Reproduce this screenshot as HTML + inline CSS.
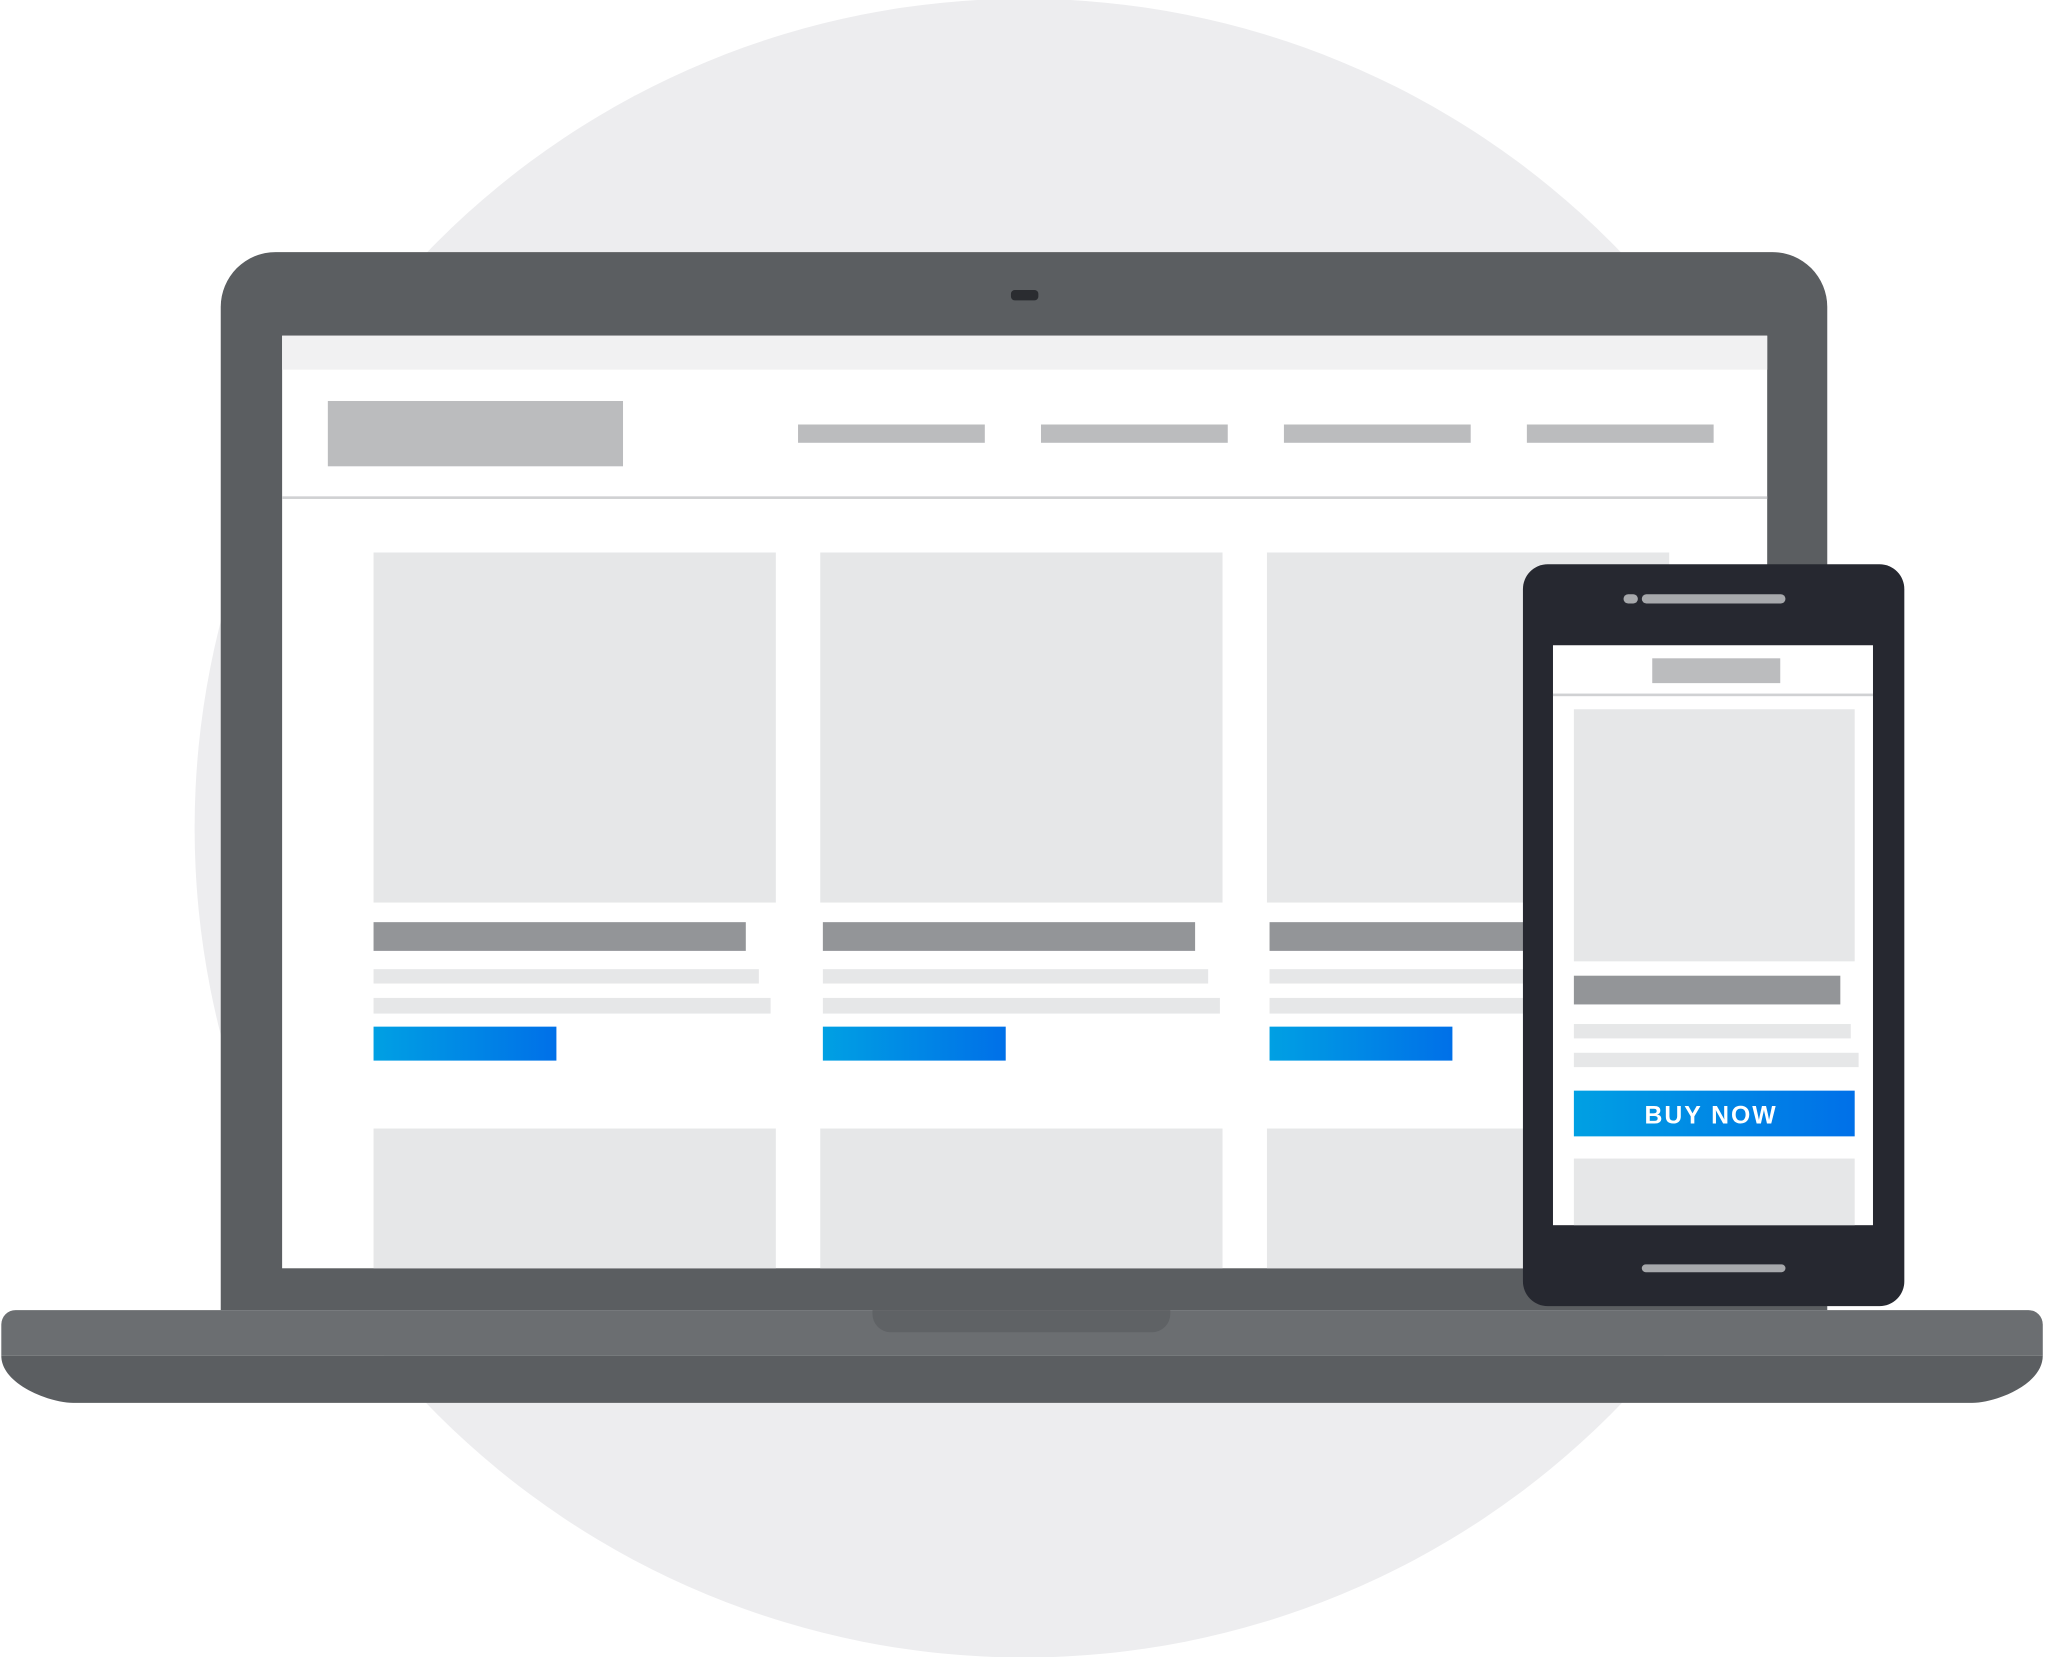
<!DOCTYPE html>
<html><head><meta charset="utf-8"><style>
html,body{margin:0;padding:0;background:#fff;width:2048px;height:1657px;overflow:hidden}
svg{display:block}
</style></head><body>
<svg width="2048" height="1657" viewBox="0 0 1568 1268.6" preserveAspectRatio="none" xmlns="http://www.w3.org/2000/svg">
<defs>
<linearGradient id="g" x1="0" x2="1" y1="0" y2="0"><stop offset="0" stop-color="#00a0e3"/><stop offset="1" stop-color="#0070e8"/></linearGradient>
</defs>
<circle cx="784" cy="634" r="635" fill="#ededef"/>
<path d="M211 193 H1357 A42 42 0 0 1 1399 235 V1003 H169 V235 A42 42 0 0 1 211 193 Z" fill="#5b5e61"/>
<rect x="774" y="222" width="21" height="8" rx="3" fill="#2a2c30"/>
<rect x="216" y="257" width="1137" height="714" fill="#fff"/>
<rect x="216" y="257" width="1137" height="26" fill="#f1f1f2"/>
<rect x="251" y="307" width="226" height="50" fill="#bbbcbe"/>
<rect x="611" y="325" width="143" height="14" fill="#bbbcbe"/>
<rect x="797" y="325" width="143" height="14" fill="#bbbcbe"/>
<rect x="983" y="325" width="143" height="14" fill="#bbbcbe"/>
<rect x="1169" y="325" width="143" height="14" fill="#bbbcbe"/>
<rect x="216" y="380" width="1137" height="2" fill="#d0d1d3"/>
<g>
<rect x="286" y="423" width="308" height="268" fill="#e6e7e8"/>
<rect x="286" y="706" width="285" height="22" fill="#939598"/>
<rect x="286" y="742" width="295" height="11" fill="#e6e7e8"/>
<rect x="286" y="764" width="304" height="12" fill="#e6e7e8"/>
<rect x="286" y="786" width="140" height="26" fill="url(#g)"/>
<rect x="286" y="864" width="308" height="107" fill="#e6e7e8"/>
</g>
<g transform="translate(342 0)">
<rect x="286" y="423" width="308" height="268" fill="#e6e7e8"/>
<rect x="288" y="706" width="285" height="22" fill="#939598"/>
<rect x="288" y="742" width="295" height="11" fill="#e6e7e8"/>
<rect x="288" y="764" width="304" height="12" fill="#e6e7e8"/>
<rect x="288" y="786" width="140" height="26" fill="url(#g)"/>
<rect x="286" y="864" width="308" height="107" fill="#e6e7e8"/>
</g>
<g transform="translate(684 0)">
<rect x="286" y="423" width="308" height="268" fill="#e6e7e8"/>
<rect x="288" y="706" width="285" height="22" fill="#939598"/>
<rect x="288" y="742" width="295" height="11" fill="#e6e7e8"/>
<rect x="288" y="764" width="304" height="12" fill="#e6e7e8"/>
<rect x="288" y="786" width="140" height="26" fill="url(#g)"/>
<rect x="286" y="864" width="308" height="107" fill="#e6e7e8"/>
</g>
<path d="M12 1003 H1553 A11 11 0 0 1 1564 1014 V1038 H1 V1014 A11 11 0 0 1 12 1003 Z" fill="#6b6e71"/>
<path d="M1 1038 H1564 C1564 1060 1528 1074 1510 1074 H56 C38 1074 1 1060 1 1038 Z" fill="#5b5e61"/>
<path d="M668 1003 H896 V1006 A14 14 0 0 1 882 1020 H682 A14 14 0 0 1 668 1006 Z" fill="#5f6265"/>
<rect x="1166" y="432" width="292" height="568" rx="19" fill="#262830"/>
<rect x="1243" y="455" width="11" height="7" rx="3.5" fill="#a7a9ac"/>
<rect x="1257" y="455" width="110" height="7" rx="3.5" fill="#a7a9ac"/>
<rect x="1257" y="968" width="110" height="6" rx="3" fill="#a7a9ac"/>
<rect x="1189" y="494" width="245" height="444" fill="#fff"/>
<rect x="1265" y="504" width="98" height="19" fill="#bbbcbe"/>
<rect x="1189" y="531" width="245" height="2" fill="#d0d1d3"/>
<rect x="1205" y="543" width="215" height="193" fill="#e6e7e8"/>
<rect x="1205" y="747" width="204" height="22" fill="#939598"/>
<rect x="1205" y="784" width="212" height="11" fill="#e6e7e8"/>
<rect x="1205" y="806" width="218" height="11" fill="#e6e7e8"/>
<rect x="1205" y="835" width="215" height="35" fill="url(#g)"/>
<text x="1310" y="860" text-anchor="middle" font-family="Liberation Sans, sans-serif" font-weight="bold" font-size="19" letter-spacing="1.5" fill="#fff">BUY NOW</text>
<rect x="1205" y="887" width="215" height="51" fill="#e6e7e8"/>
</svg>
</body></html>
